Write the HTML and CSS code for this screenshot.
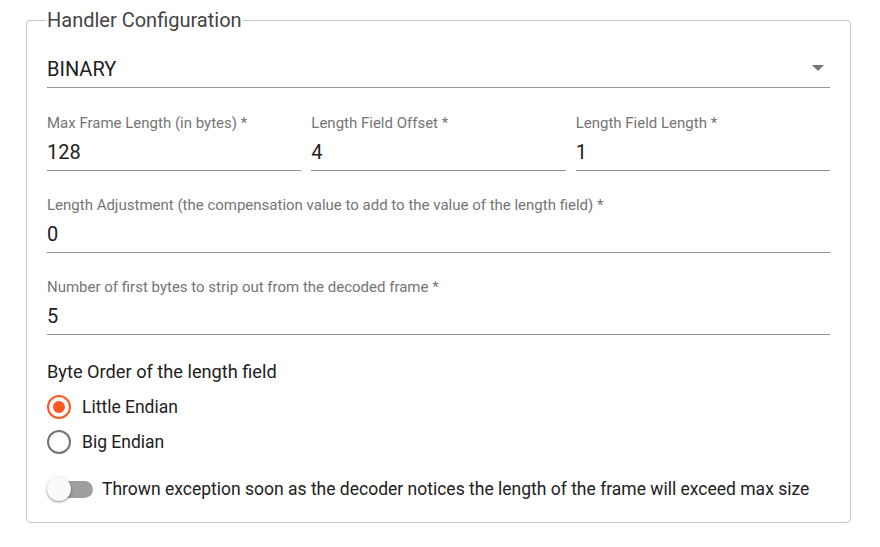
FILE: index.html
```html
<!DOCTYPE html>
<html>
<head>
<meta charset="utf-8">
<link rel="stylesheet" href="styles.css">
</head>
<body>
<fieldset class="panel">
  <legend class="panel-title">Handler Configuration</legend>
  <div class="select">
    <span class="select-value">BINARY</span>
    <span class="select-arrow"></span>
  </div>
  <div class="row3">
    <div class="field">
      <div class="label">Max Frame Length (in bytes) *</div>
      <div class="value">128</div>
    </div>
    <div class="field">
      <div class="label">Length Field Offset *</div>
      <div class="value">4</div>
    </div>
    <div class="field">
      <div class="label">Length Field Length *</div>
      <div class="value">1</div>
    </div>
  </div>
  <div class="field wide">
    <div class="label">Length Adjustment (the compensation value to add to the value of the length field) *</div>
    <div class="value">0</div>
  </div>
  <div class="field wide">
    <div class="label">Number of first bytes to strip out from the decoded frame *</div>
    <div class="value">5</div>
  </div>
  <div class="group-title">Byte Order of the length field</div>
  <div class="radio first"><span class="radio-circle checked"></span><span>Little Endian</span></div>
  <div class="radio"><span class="radio-circle"></span><span>Big Endian</span></div>
  <div class="toggle">
    <span class="toggle-switch"><span class="toggle-track"></span><span class="toggle-thumb"></span></span>
    <span class="toggle-label">Thrown exception soon as the decoder notices the length of the frame will exceed max size</span>
  </div>
</fieldset>
</body>
</html>
```

FILE: styles.css
```css
html, body {
  margin: 0;
  padding: 0;
  background: #fff;
}
body {
  font-family: Roboto, "Noto Sans", sans-serif;
  color: #212121;
  padding: 10px 29px 0 26px;
}
.panel {
  margin: 0;
  border: 1px solid #c8c8c8;
  border-radius: 4px;
  padding: 8px 20px 20px 20px;
  width: 825px;
  box-sizing: border-box;
}
.panel-title {
  font-size: 20px;
  color: #444;
  padding: 0 1px;
  line-height: 20px;
  margin-left: -1px;
}
.select {
  display: flex;
  align-items: center;
  justify-content: space-between;
  border-bottom: 1px solid #949494;
  height: 40px;
  margin-top: 9px;
}
.select-value {
  font-size: 20px;
  padding-top: 3px;
}
.select-arrow {
  width: 0;
  height: 0;
  border-left: 6px solid transparent;
  border-right: 6px solid transparent;
  border-top: 6px solid #757575;
  margin-right: 6px;
  margin-top: 2px;
}
.row3 {
  display: flex;
  gap: 10px;
  margin-top: 26px;
}
.row3 .field {
  flex: 1;
}
.field {
  border-bottom: 1px solid #949494;
}
.field.wide {
  margin-top: 25px;
}
.label {
  font-size: 15px;
  color: #757575;
  line-height: 18px;
}
.value {
  font-size: 20px;
  line-height: 24px;
  margin-top: 8px;
  padding-bottom: 6px;
}
.group-title {
  font-size: 18.2px;
  margin-top: 26px;
  line-height: 22px;
}
.radio {
  display: flex;
  align-items: center;
  gap: 11px;
  font-size: 17.5px;
  height: 35px;
}
.radio.first {
  margin-top: 6px;
}
.radio-circle {
  width: 24px;
  height: 24px;
  box-sizing: border-box;
  border: 2px solid #737373;
  border-radius: 50%;
  display: inline-flex;
  align-items: center;
  justify-content: center;
}
.radio-circle.checked {
  border-color: #ff5722;
}
.radio-circle.checked::after {
  content: "";
  width: 12px;
  height: 12px;
  border-radius: 50%;
  background: #ff5722;
}
.toggle {
  display: flex;
  align-items: center;
  gap: 9px;
  margin-top: 17px;
  height: 26px;
}
.toggle-switch {
  position: relative;
  width: 46px;
  height: 26px;
  flex: none;
}
.toggle-track {
  position: absolute;
  left: 6px;
  top: 5px;
  width: 40px;
  height: 17px;
  border-radius: 9px;
  background: #9e9e9e;
}
.toggle-thumb {
  position: absolute;
  left: 0;
  top: 1px;
  width: 24px;
  height: 24px;
  border-radius: 50%;
  background: #fafafa;
  box-shadow: 0 1px 3px rgba(0,0,0,0.35), 0 1px 1px rgba(0,0,0,0.14);
}
.toggle-label {
  font-size: 17.5px;
  white-space: nowrap;
}
```
